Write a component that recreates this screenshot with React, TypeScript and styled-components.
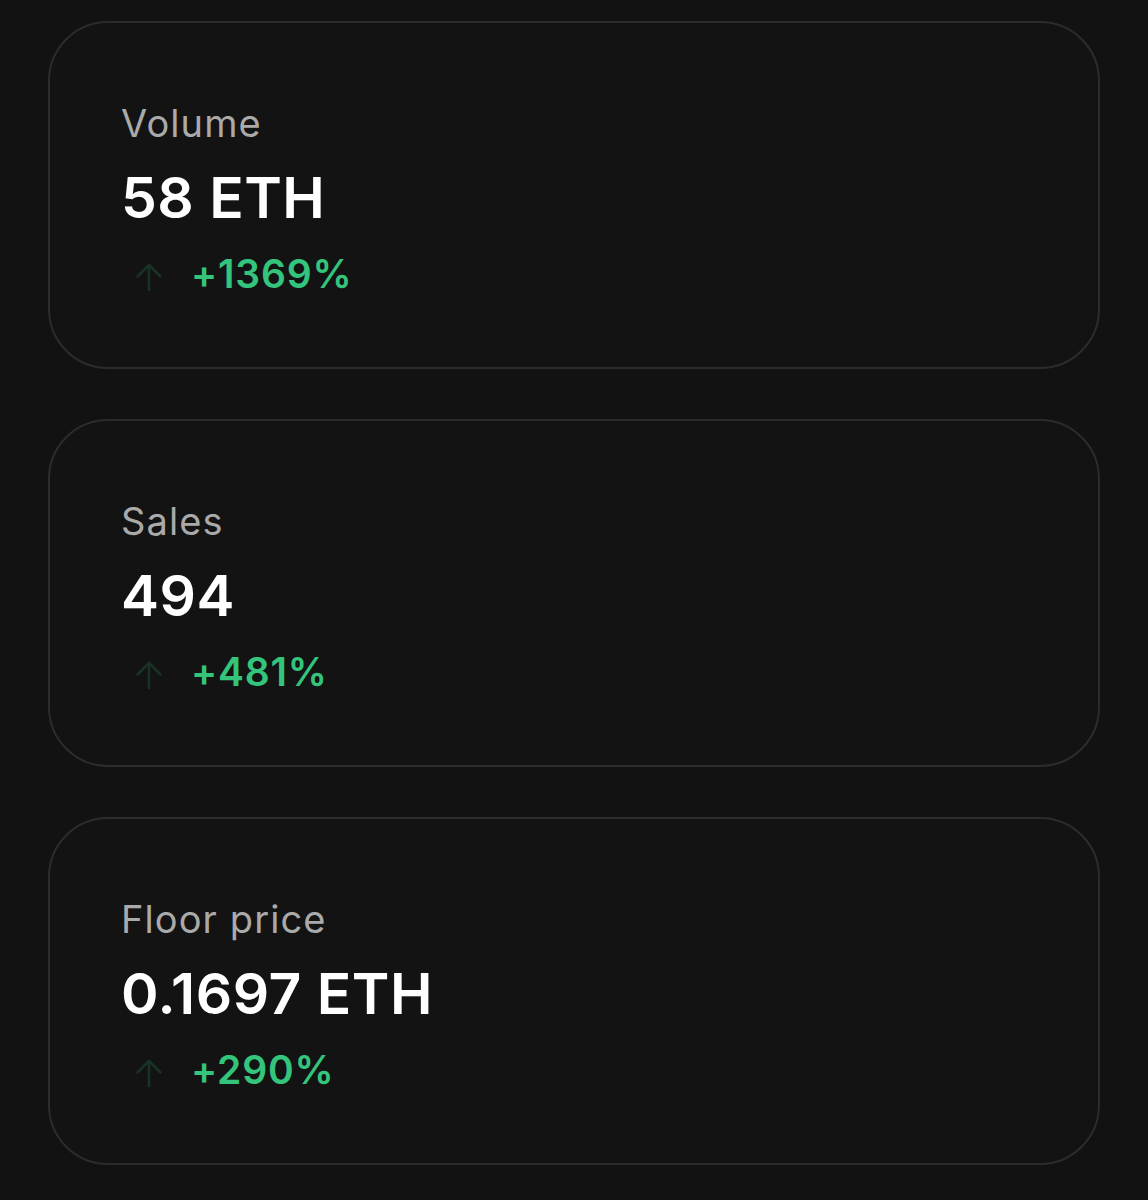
import React from "react";
import styled, { createGlobalStyle } from "styled-components";

const Global = createGlobalStyle`
  html, body {
    margin: 0;
    padding: 0;
    background: #121212;
  }
  body {
    font-family: Inter, "Noto Sans", "Liberation Sans", sans-serif;
    -webkit-font-smoothing: antialiased;
  }
`;

const Page = styled.main`
  display: flex;
  flex-direction: column;
  gap: 50px;
  padding: 21px 48px 36px;
  min-height: 1200px;
  box-sizing: border-box;
  background: #121212;
`;

const Card = styled.section`
  box-sizing: border-box;
  height: 348px;
  border: 2px solid #2c2c2c;
  border-radius: 60px;
  background: #131313;
  padding: 81px 71px 0;
  display: flex;
  flex-direction: column;
`;

const Label = styled.div`
  font-size: 38px;
  line-height: 38px;
  font-weight: 400;
  color: #aaaaaa;
  letter-spacing: 1.1px;
`;

const Value = styled.div`
  margin-top: 27px;
  font-size: 57px;
  line-height: 57px;
  font-weight: 600;
  color: #ffffff;
  letter-spacing: 0.5px;
`;

const Change = styled.div`
  margin-top: 28px;
  display: flex;
  align-items: center;
  gap: 28px;
  padding-left: 14px;
  height: 39px;
`;

const Arrow = styled.svg`
  width: 28px;
  height: 30px;
  flex: none;
  margin-top: 6px;
`;

const Percent = styled.span`
  font-size: 39px;
  line-height: 39px;
  font-weight: 600;
  color: #34c47c;
  letter-spacing: 0.8px;
`;

const UpArrow = () => (
  <Arrow viewBox="0 0 28 30" fill="none" stroke="#183323" strokeWidth="2.6" strokeLinecap="round" strokeLinejoin="round">
    <path d="M14 28V3" />
    <path d="M2.5 14.5L14 3l11.5 11.5" />
  </Arrow>
);

const stats = [
  { label: "Volume", value: "58 ETH", change: "+1369%" },
  { label: "Sales", value: "494", change: "+481%" },
  { label: "Floor price", value: "0.1697 ETH", change: "+290%" },
];

export default function App() {
  return (
    <>
      <Global />
      <Page>
        {stats.map((s) => (
          <Card key={s.label}>
            <Label>{s.label}</Label>
            <Value>{s.value}</Value>
            <Change>
              <UpArrow />
              <Percent>{s.change}</Percent>
            </Change>
          </Card>
        ))}
      </Page>
    </>
  );
}
